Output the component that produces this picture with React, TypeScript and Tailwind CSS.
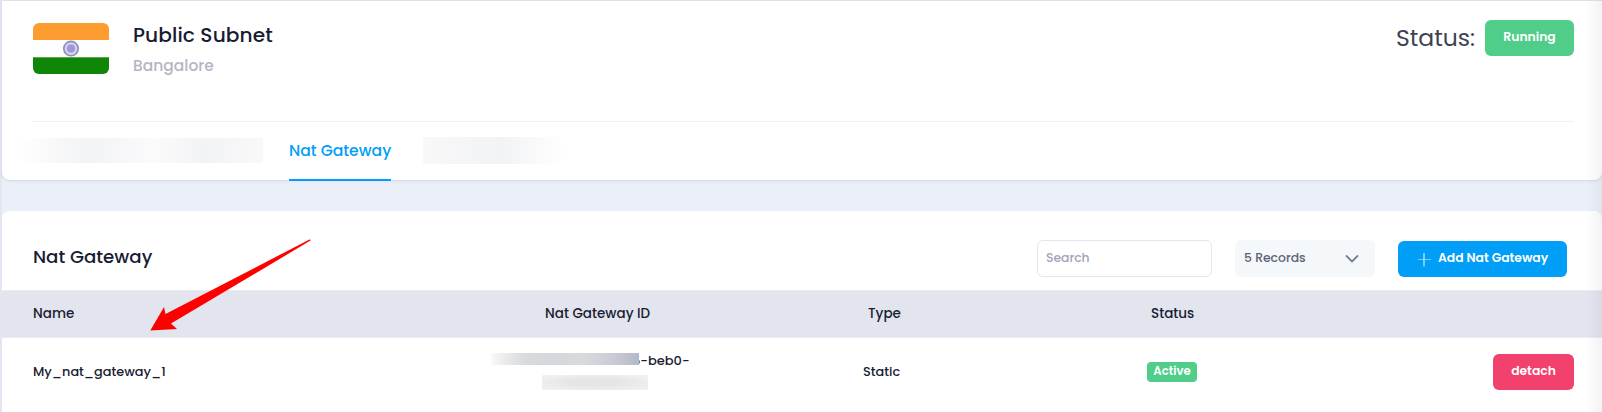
import { ReactNode } from 'react';

function Flag() {
  return (
    <svg width="76" height="51" viewBox="0 0 76 51" className="block rounded-md">
      <rect width="76" height="17" fill="#fd9c30" />
      <rect y="17" width="76" height="17.5" fill="#fdfefd" />
      <rect y="34.3" width="76" height="17" fill="#0f8608" />
      <circle cx="38" cy="25.6" r="7.2" fill="#d3d1f0" stroke="#8f8db8" strokeWidth="1.6" />
      <circle cx="38" cy="25.6" r="4" fill="#8f8cd0" opacity=".8" />
    </svg>
  );
}

function HeadCell({ children, className = '' }: { children?: ReactNode; className?: string }) {
  return <div className={`text-[13.5px] leading-5 font-medium whitespace-nowrap ${className}`}>{children}</div>;
}

function Cell({ children, className = '' }: { children?: ReactNode; className?: string }) {
  return <div className={`pb-[6px] text-[12.85px] leading-5 font-medium whitespace-nowrap ${className}`}>{children}</div>;
}

const columns = 'grid grid-cols-[488px_220px_246px_506px_90px] items-center pl-[31px]';

export default function App() {
  return (
    <div className="relative h-[412px] w-[1602px] overflow-hidden bg-[#ebeff8] font-['Poppins','Inter',sans-serif] text-[#181c32]">
      <div className="flex h-full flex-col border-l-2 border-[#e3e6f1]">
        <section className="h-[180px] shrink-0 rounded-b-lg border-t border-[#e2e2e4] bg-white pr-7 pl-[31px] shadow-[0_1px_3px_rgba(120,130,170,0.22)]">
          <div className="flex h-[120px] items-start">
            <div className="pt-[22px]"><Flag /></div>
            <div className="pt-5 pl-6">
              <h1 className="text-[20.15px] leading-7 font-medium tracking-[0.1px]">Public Subnet</h1>
              <p className="mt-[5px] text-[15.5px] leading-6 font-medium text-[#b5b5c3]">Bangalore</p>
            </div>
            <div className="ml-auto flex items-start pt-[19px]">
              <span className="mr-[10px] text-[23.5px] leading-[36px] text-[#3f4254]">Status:</span>
              <span className="flex h-9 w-[89px] items-center justify-center rounded-md bg-[#50cd89] pb-[2px] text-[12.35px] leading-5 font-semibold text-white">Running</span>
            </div>
          </div>
          <nav className="flex h-[59px] items-start border-t border-[#f1f1f4]">
            <div className="-ml-[15px] mt-4 flex h-[25px] w-[245px] bg-white">
              <div className="h-full w-[138px] bg-linear-to-r from-white via-[#f2f3f5] via-50% to-[#fbfbfc]" />
              <div className="h-full grow bg-linear-to-r from-[#fbfbfc] via-[#f2f3f5] via-45% to-[#f9f9fa]" />
            </div>
            <div className="ml-[26px] flex h-[59px] w-[102px] flex-col border-b-2 border-[#009ef7] pt-[17px] text-[15.6px] leading-6 font-medium whitespace-nowrap text-[#009ef7]">Nat Gateway</div>
            <div className="mt-[15px] ml-8 h-[27px] w-[142px] bg-linear-to-r from-[#f8f8f9] via-[#f2f3f5] via-55% to-white" />
          </nav>
        </section>

        <section className="mt-[31px] h-[201px] shrink-0 rounded-t-lg bg-white">
          <div className="flex h-[79px] items-start pr-[35px] pl-[31px]">
            <h2 className="pt-8 text-[18.2px] leading-[27px] font-medium">Nat Gateway</h2>
            <input placeholder="Search" className="mt-[29px] ml-auto h-[37px] w-[175px] rounded-md border border-[#e4e6ef] px-2 pb-[2px] text-[12.35px] leading-5 font-medium outline-none placeholder:text-[#a1a5b7]" />
            <div className="mt-[29px] ml-[23px] flex h-[37px] w-[140px] items-center justify-between rounded-md bg-[#f5f8fa] pr-4 pb-[2px] pl-[9px] text-[12.4px] leading-5 font-medium text-[#5e6278]">
              <span>5 Records</span>
              <svg width="14" height="10" viewBox="0 0 14 10" fill="none" stroke="#7a7f98" strokeWidth="1.8" strokeLinecap="round" strokeLinejoin="round" className="mt-[3px]"><path d="M1.5 2 7 7.5 12.5 2" /></svg>
            </div>
            <button className="mt-[30px] ml-[23px] flex h-9 w-[169px] items-center rounded-md bg-[#009ef7] pb-[2px] pl-5 text-[12.35px] leading-5 font-semibold whitespace-nowrap text-white">
              <svg width="13" height="14" viewBox="0 0 13 14" className="mt-[3px] mr-[7px]"><path d="M0 6.5h13" stroke="#fff" opacity=".45" /><path d="M6 0v13.5" stroke="#fff" opacity=".95" /></svg>
              Add Nat Gateway
            </button>
          </div>

          <div className={`${columns} h-[48px] border-y border-[#eaecf4] bg-[#e2e4ee] pb-px`}>
            <HeadCell>Name</HeadCell>
            <HeadCell className="pl-6">Nat Gateway ID</HeadCell>
            <HeadCell className="pl-[127px]">Type</HeadCell>
            <HeadCell className="pl-[164px]">Status</HeadCell>
          </div>

          <div className={`${columns} h-[74px]`}>
            <Cell>My_nat_gateway_1</Cell>
            <div className="-ml-[30px] h-[74px] w-[199px] self-start pt-3">
              <div className="flex h-[22px] items-start justify-start">
                <div className="relative z-10 mt-[3px] h-[12px] w-[148px] shrink-0 bg-linear-to-r from-[#fafafa] via-[#d9dade] via-25% to-[#b2b8c8]">
                  <div className="h-full w-full bg-linear-to-r from-transparent via-[#d9dade] via-60% to-transparent" />
                </div>
                <span className="-ml-[7px] text-[13px] leading-[22px] font-medium whitespace-nowrap">5-beb0-</span>
              </div>
              <div className="mt-[3px] ml-[51px] h-[15px] w-[106px] bg-radial from-[#e5e5e7] from-30% to-[#f3f3f4]" />
            </div>
            <Cell className="pl-[122px]">Static</Cell>
            <div className="pb-[6px] pl-[160px]">
              <span className="flex h-5 w-[50px] items-center justify-center rounded bg-[#50cd89] pb-px text-[11.7px] font-semibold text-white">Active</span>
            </div>
            <button className="mb-[6px] flex h-9 w-[81px] items-center justify-center rounded-md bg-[#f1416c] pb-[2px] text-[12.35px] leading-5 font-semibold text-white">detach</button>
          </div>
        </section>
      </div>

      <div className="pointer-events-none absolute inset-y-0 right-0 w-4 bg-linear-to-r from-transparent to-[#8085a0]/10" />
      <svg className="pointer-events-none absolute top-[238px] left-[149px]" width="164" height="94" viewBox="0 0 164 94">
        <path d="M161 1.2 161.5 2.6 22 85.5 28 91 1.3 92.5 15 69 16.5 76Z" fill="#f00" />
      </svg>
    </div>
  );
}
